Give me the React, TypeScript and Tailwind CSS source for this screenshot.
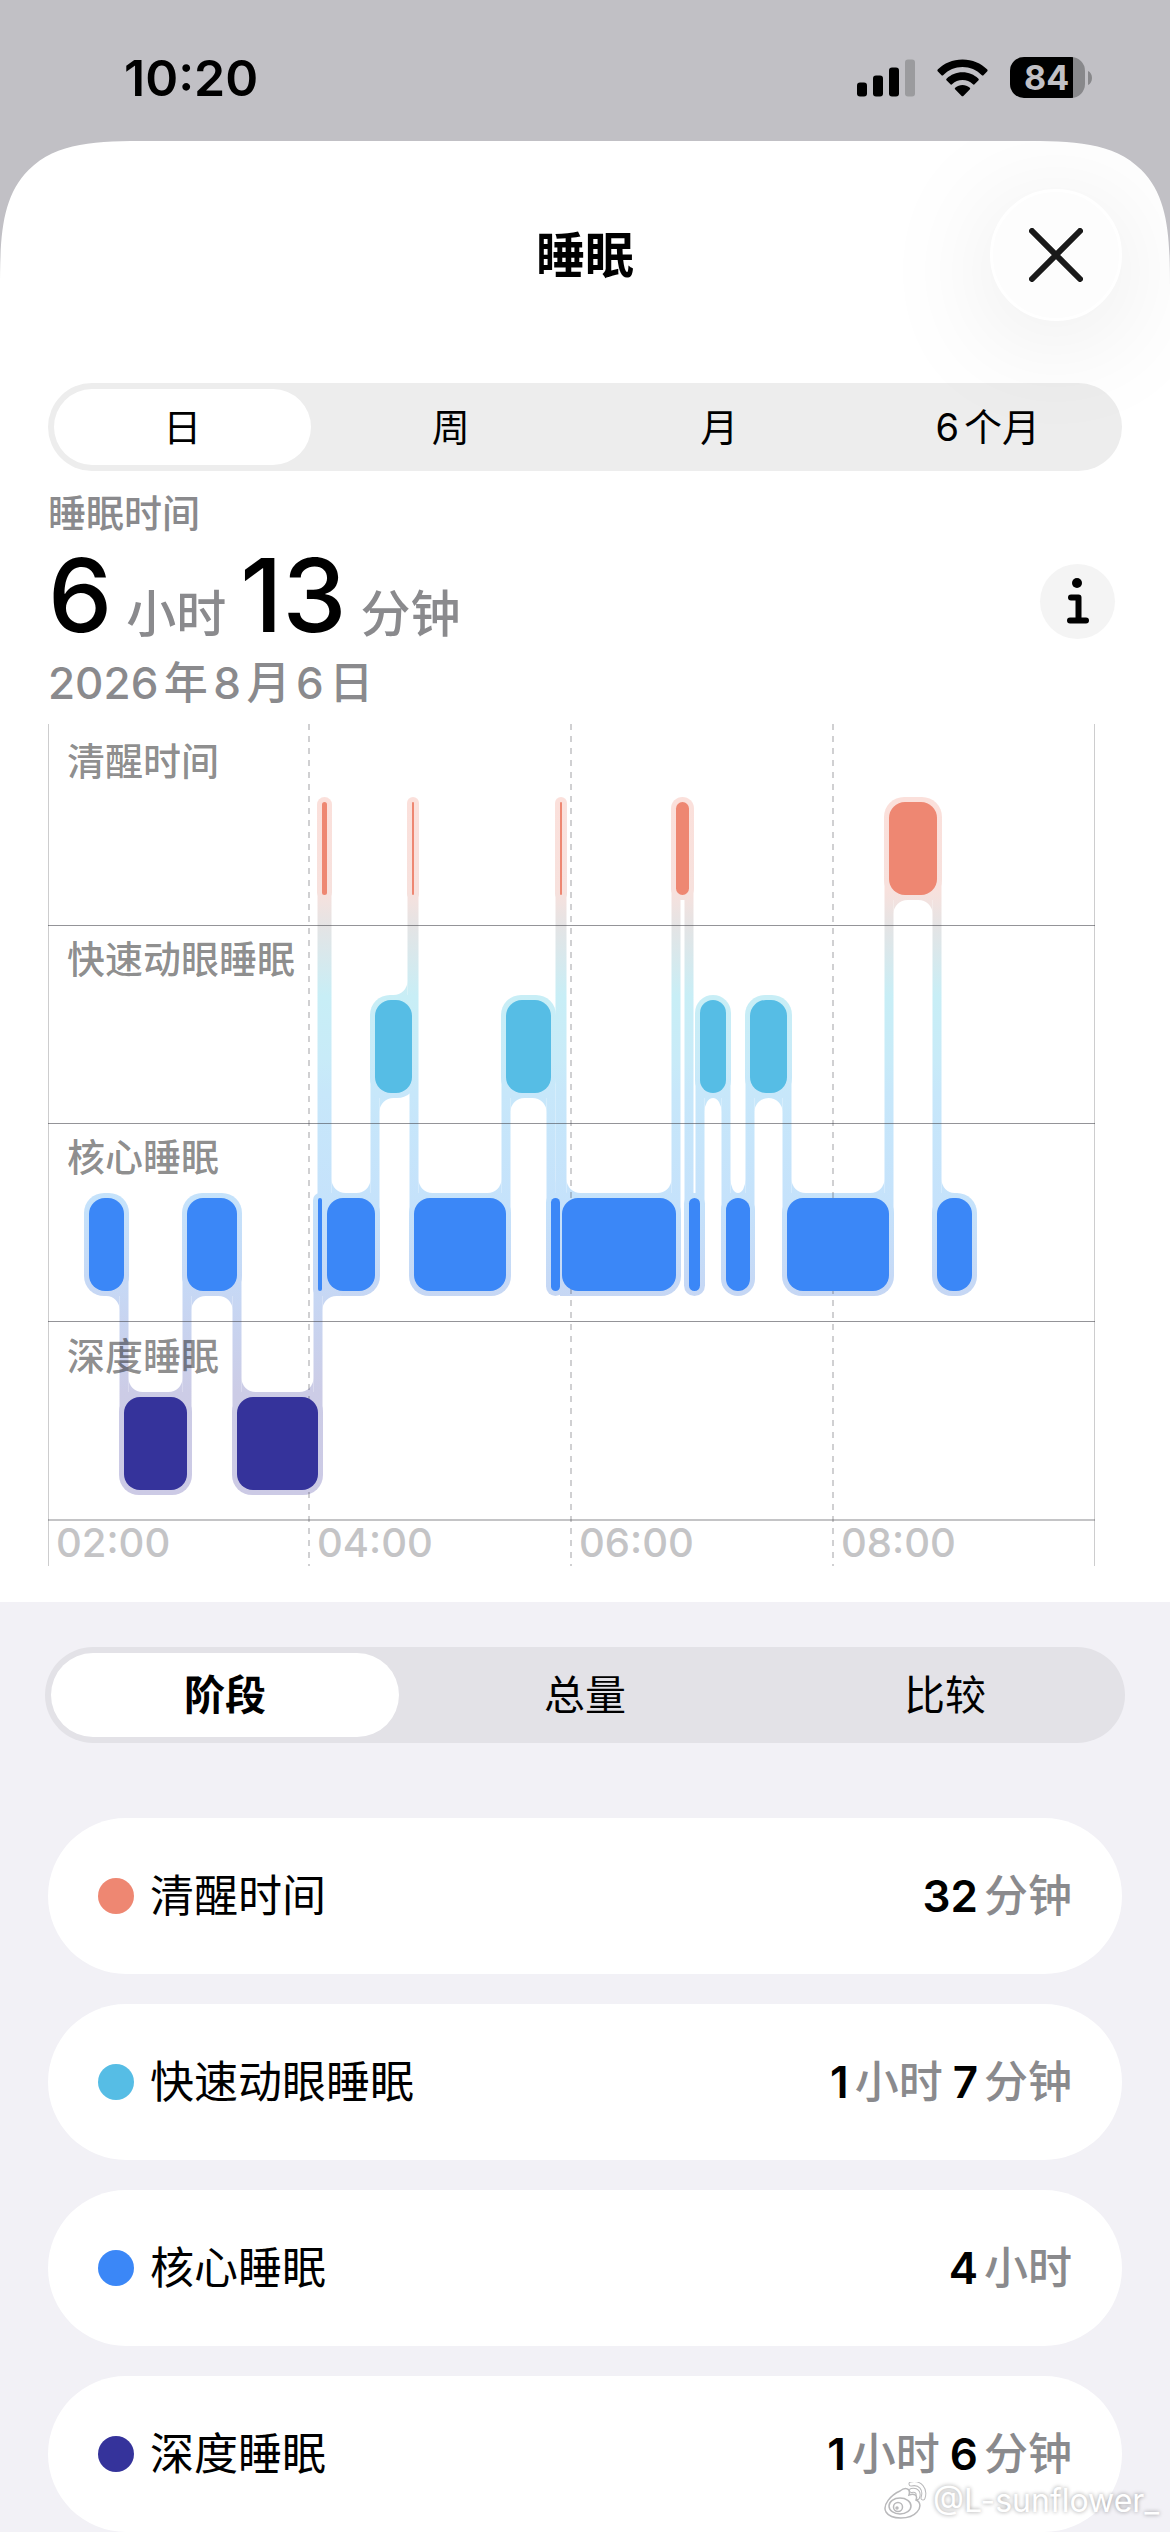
import { useState } from "react";

type Stage = "awake" | "rem" | "core" | "deep";

type Segment = { stage: Stage; start: number; end: number };

const stages: { id: Stage; name: string; color: string; dot: string; top: number }[] = [
  { id: "awake", name: "清醒时间", color: "#ee8772", dot: "bg-[#ee8772]", top: 78 },
  { id: "rem", name: "快速动眼睡眠", color: "#56bde5", dot: "bg-[#56bde5]", top: 276 },
  { id: "core", name: "核心睡眠", color: "#3b87f7", dot: "bg-[#3b87f7]", top: 474 },
  { id: "deep", name: "深度睡眠", color: "#35339b", dot: "bg-[#35339b]", top: 673 },
];

const totals: Record<Stage, { value: number; unit: string }[]> = {
  awake: [{ value: 32, unit: "分钟" }],
  rem: [
    { value: 1, unit: "小时" },
    { value: 7, unit: "分钟" },
  ],
  core: [{ value: 4, unit: "小时" }],
  deep: [
    { value: 1, unit: "小时" },
    { value: 6, unit: "分钟" },
  ],
};

// Chart units along the time axis, 131 per hour from 02:00
const segments: Segment[] = [
  { stage: "core", start: 41, end: 76 },
  { stage: "deep", start: 76, end: 139 },
  { stage: "core", start: 139, end: 189 },
  { stage: "deep", start: 189, end: 270 },
  { stage: "core", start: 270, end: 274 },
  { stage: "awake", start: 274, end: 279 },
  { stage: "core", start: 279, end: 327 },
  { stage: "rem", start: 327, end: 364 },
  { stage: "awake", start: 364, end: 366 },
  { stage: "core", start: 366, end: 458 },
  { stage: "rem", start: 458, end: 503 },
  { stage: "core", start: 503, end: 512 },
  { stage: "awake", start: 512, end: 514 },
  { stage: "core", start: 514, end: 628 },
  { stage: "awake", start: 628, end: 641 },
  { stage: "core", start: 641, end: 652 },
  { stage: "rem", start: 652, end: 678 },
  { stage: "core", start: 678, end: 702 },
  { stage: "rem", start: 702, end: 739 },
  { stage: "core", start: 739, end: 841 },
  { stage: "awake", start: 841, end: 889 },
  { stage: "core", start: 889, end: 924 },
];

const ticks = [
  { x: 0, label: "02:00" },
  { x: 261, label: "04:00" },
  { x: 523, label: "06:00" },
  { x: 785, label: "08:00" },
];

const BAR = 93;
const HALO = 5;
const LINK = 4.5;
const FILLET = 14;

const topOf = (stage: Stage) => stages.find((s) => s.id === stage)!.top;

// Blocks of one stage with only a blink between them count as one run
const bridges: { x: number; y: number }[] = [];
const runs = segments.reduce<Segment[]>((acc, seg) => {
  const last = acc.filter((r) => r.stage === seg.stage).pop();
  if (last && seg.start - last.end <= 5) {
    bridges.push({ x: last.end, y: topOf(seg.stage) - HALO });
    last.end = seg.end;
  } else {
    acc.push({ ...seg });
  }
  return acc;
}, []);

// Squares off the halo beside a link, then adds the concave corner outside it
function fillet(x: number, stage: Stage, dir: 1 | -1, edge: "top" | "bottom") {
  const run = runs.find((r) => r.stage === stage && x >= r.start && x <= r.end)!;
  const room = dir === 1 ? run.end - x : x - run.start;
  const out = edge === "top" ? -1 : 1;
  const cx = x + dir * LINK;
  const cy = edge === "top" ? topOf(stage) - HALO : topOf(stage) + BAR + HALO;
  const square = `M${x} ${cy}H${cx + dir * Math.min(16, room / 2)}V${cy - out * 20}H${x}Z`;
  const rx = Math.min(FILLET, (room - LINK * 2) / 2);
  if (rx < 3) return room > 5 ? square : "";
  const sweep = (dir === 1) === (edge === "top") ? 0 : 1;
  return `${square}M${cx} ${cy}V${cy + out * FILLET}A${rx} ${FILLET} 0 0 ${sweep} ${cx + dir * rx} ${cy}Z`;
}

const links = segments.slice(1).map((next, i) => {
  const prev = segments[i];
  const x = next.start;
  const down = topOf(next.stage) > topOf(prev.stage);
  const upper = down ? prev.stage : next.stage;
  const lower = down ? next.stage : prev.stage;
  return {
    x,
    y: topOf(upper) + BAR / 2,
    height: topOf(lower) - topOf(upper),
    corners: [fillet(x, upper, down ? -1 : 1, "bottom"), fillet(x, lower, down ? 1 : -1, "top")],
  };
});

function SleepChart() {
  return (
    <svg viewBox="0 0 1074 842" className="block w-full" role="img" aria-label="睡眠阶段图表">
      <defs>
        <linearGradient id="halo" gradientUnits="userSpaceOnUse" x1="0" y1="78" x2="0" y2="771">
          <stop offset="0" stopColor="#fbe0db" />
          <stop offset="0.13" stopColor="#f7e1dd" />
          <stop offset="0.18" stopColor="#e4e4e5" />
          <stop offset="0.28" stopColor="#c8eef6" />
          <stop offset="0.37" stopColor="#c8ebf8" />
          <stop offset="0.42" stopColor="#c7e7fa" />
          <stop offset="0.58" stopColor="#c5e2fb" />
          <stop offset="0.7" stopColor="#c6d8f5" />
          <stop offset="0.85" stopColor="#cccce6" />
          <stop offset="1" stopColor="#cccae5" />
        </linearGradient>
      </defs>

      <g fill="url(#halo)">
        {segments.map((s) => {
          const width = s.end - s.start + HALO * 2;
          return (
            <rect
              key={s.start}
              x={s.start - HALO}
              y={topOf(s.stage) - HALO}
              width={width}
              height={BAR + HALO * 2}
              rx={Math.min(20, width / 2)}
            />
          );
        })}
        {bridges.map((b) => (
          <rect key={b.x} x={b.x} y={b.y} width="18" height={BAR + HALO * 2} />
        ))}
        {links.map((l) => (
          <g key={l.x}>
            <rect x={l.x - LINK} y={l.y} width={LINK * 2} height={l.height} />
            {l.corners.map((d, i) => d && <path key={i} d={d} />)}
          </g>
        ))}
      </g>

      {/* Hour and stage lines */}
      <path d="M.5 0V842M1046.5 0V842" stroke="#3c3c43" strokeOpacity="0.26" />
      {ticks.slice(1).map((t) => (
        <path
          key={t.x}
          d={`M${t.x} 0V842`}
          stroke="#3c3c43"
          strokeOpacity="0.24"
          strokeWidth="2"
          strokeDasharray="6 6"
        />
      ))}
      <path d="M0 201.5H1047M0 399.5H1047M0 597.5H1047" stroke="#3c3c43" strokeOpacity="0.55" />
      <path d="M0 796H1047" stroke="#3c3c43" strokeOpacity="0.3" strokeWidth="2" />

      {segments.map((s) => (
        <rect
          key={s.start}
          x={s.start}
          y={topOf(s.stage)}
          width={s.end - s.start}
          height={BAR}
          rx={Math.min(16, (s.end - s.start) / 2)}
          fill={stages.find((st) => st.id === s.stage)!.color}
        />
      ))}

      <g fontSize="38" fontWeight="500" fill="#000" fillOpacity="0.46">
        {stages.map((s) => (
          <text key={s.id} x="19" y={s.top - 27}>
            {s.name}
          </text>
        ))}
      </g>
      <g fontSize="40" fontWeight="500" fill="#c4c4c6">
        {ticks.map((t) => (
          <text key={t.x} x={t.x + 8} y="833">
            {t.label}
          </text>
        ))}
      </g>
    </svg>
  );
}

function StatusBar() {
  return (
    <div className="flex h-[141px] items-center justify-between pl-[124px] pr-[78px] pt-[14px]">
      <span className="text-[50px] font-semibold leading-none">10:20</span>
      <div className="flex items-center">
        <svg width="58" height="38" viewBox="0 0 58 38" aria-hidden="true">
          <rect x="0" y="23.500" width="10" height="14" rx="3" />
          <rect x="16" y="16.500" width="10" height="21" rx="3" />
          <rect x="32" y="8.500" width="10" height="29" rx="3" />
          <rect x="48" y="0.500" width="10" height="37" rx="3" fill="#9b9b9e" />
        </svg>
        <svg className="ml-[22px]" width="51" height="38" viewBox="0 0 51 38" aria-hidden="true">
          <path d="M25.500 .5C35.500 .5 44 4.300 50 10.300c.8.800.8 1.500.1 2.200l-3.400 3.400c-.7.700-1.400.7-2.100 0C39.500 11 33 8 25.500 8S11.500 11 6.400 15.900c-.7.700-1.400.7-2.100 0L.9 12.500c-.7-.7-.7-1.400.1-2.200C7 4.300 15.500.5 25.500.5z" />
          <path d="M25.500 13.300c6.200 0 11.700 2.400 15.700 6.200.8.700.8 1.400.1 2.100l-3.500 3.500c-.7.700-1.300.7-2.100 0-2.700-2.500-6.200-4-10.200-4s-7.500 1.500-10.200 4c-.8.700-1.400.7-2.100 0l-3.500-3.500c-.7-.7-.7-1.400.1-2.100 4-3.800 9.500-6.200 15.700-6.200z" />
          <path d="M25.500 26c2.700 0 5.100.9 7 2.400.9.700.9 1.400.2 2.100l-6.100 6.200c-.8.800-1.400.8-2.200 0l-6.100-6.200c-.7-.7-.7-1.400.2-2.100 1.900-1.500 4.300-2.400 7-2.400z" />
        </svg>
        <div className="ml-[22px] flex h-[41px] w-[75px] items-center overflow-hidden rounded-[14px] bg-[linear-gradient(90deg,#000_84%,#88888b_84%)] pl-[14px] text-[34px] font-bold leading-none text-[#c1c0c5]">
          84
        </div>
        <svg className="ml-[3px]" width="4" height="14" viewBox="0 0 4 14" aria-hidden="true">
          <path d="M0 0c2.500 1 4 3.700 4 7s-1.500 6-4 7z" fill="#88888b" />
        </svg>
      </div>
    </div>
  );
}

function Watermark() {
  return (
    <div className="absolute bottom-[12px] right-[11px] flex items-center gap-[6px] text-[32px] leading-none text-white [text-shadow:0_0_4px_#00000066]">
      <svg width="44" height="38" viewBox="0 0 44 38" fill="none" stroke="#b9b9bb" strokeWidth="1.500" aria-hidden="true">
        <path d="M28 2c9-2 15 5 12 14M28.500 8.500c5-1 8 2 6 7" stroke="#b9b9bb" strokeWidth="5" strokeLinecap="round" />
        <path d="M28 2c9-2 15 5 12 14M28.500 8.500c5-1 8 2 6 7" stroke="#fff" strokeWidth="3" strokeLinecap="round" />
        <path d="M17 9c5-4 11-3 9 4 5-2 9 0 7 5 5 2 5 8 1 12-7 8-26 8-31 0C-1 23 8 13 17 9z" fill="#fff" />
        <ellipse cx="17" cy="24" rx="11" ry="8" />
        <circle cx="15" cy="25" r="4.500" />
        <circle cx="14" cy="26" r="1" />
      </svg>
      @L-sunflower_
    </div>
  );
}

const ranges = ["日", "周", "月", "6个月"];
const views = ["阶段", "总量", "比较"];

export default function App() {
  const [range, setRange] = useState("日");
  const [view, setView] = useState("阶段");

  return (
    <div className="relative min-h-screen bg-[#c1c0c5] font-['Inter','Noto_Sans_CJK_SC',sans-serif] text-black">
      <StatusBar />

      <main className="overflow-hidden rounded-t-[108px] bg-white [corner-shape:superellipse(1.7)] supports-[corner-shape:squircle]:rounded-t-[150px]">
        <header className="grid grid-cols-[132px_1fr_132px] items-center px-[48px] pb-[62px] pt-[48px]">
          <h1 className="col-start-2 text-center text-[49px] font-bold leading-none">睡眠</h1>
          <button
            aria-label="关闭"
            className="flex h-[132px] w-[132px] items-center justify-center rounded-full border-[3px] border-white bg-[#fdfdfd] shadow-[0_16px_120px_#0000001a]"
          >
            <svg width="54" height="54" viewBox="0 0 54 54" stroke="#1a1a1a" strokeWidth="6" strokeLinecap="round">
              <path d="M3 3l48 48M51 3L3 51" />
            </svg>
          </button>
        </header>

        <div className="mx-[48px] grid h-[88px] grid-cols-4 rounded-full bg-[#ededed]">
          {ranges.map((r) => (
            <button
              key={r}
              onClick={() => setRange(r)}
              className={`m-[6px] rounded-full text-[38px] leading-none [text-autospace:normal] ${
                r === range ? "bg-white" : ""
              }`}
            >
              {r}
            </button>
          ))}
        </div>

        {/* Summary */}
        <section className="flex items-center justify-between px-[48px] pt-[16px]">
          <div className="text-[#8a8a8d]">
            <p className="text-[38px] font-medium leading-[52px]">睡眠时间</p>
            <p className="flex items-baseline text-[50px] font-medium leading-none">
              <span className="text-[102px] leading-[112px] text-black">6</span>
              <span className="ml-[14px]">小时</span>
              <span className="ml-[14px] text-[102px] leading-[112px] text-black">13</span>
              <span className="ml-[14px]">分钟</span>
            </p>
            <p className="text-[44px] font-medium leading-[64px] [text-autospace:normal]">2026年8月6日</p>
          </div>
          <button
            aria-label="关于睡眠时间"
            className="mr-[7px] flex h-[75px] w-[75px] items-center justify-center rounded-full bg-[#f4f4f4]"
          >
            <svg width="22" height="46" viewBox="0 0 22 46" fill="none" stroke="#000" strokeWidth="6" strokeLinecap="round" strokeLinejoin="round">
              <circle cx="10" cy="5" r="5" fill="#000" stroke="none" />
              <path d="M4 19.500h7.500V42M3 42.500h16" />
            </svg>
          </button>
        </section>

        <div className="px-[48px] pb-[36px] pt-[9px]">
          <SleepChart />
        </div>

        <section className="bg-[#f2f1f6] pt-[45px]">
          <div className="mx-[45px] grid h-[96px] grid-cols-3 rounded-full bg-[#e3e2e7]">
            {views.map((v) => (
              <button
                key={v}
                onClick={() => setView(v)}
                className={`m-[6px] rounded-full text-[41px] leading-none ${
                  v === view ? "bg-white font-bold" : ""
                }`}
              >
                {v}
              </button>
            ))}
          </div>

          <ul className="mt-[75px] flex flex-col gap-[30px] px-[48px]">
            {stages.map((s) => (
              <li key={s.id} className="flex h-[156px] items-center rounded-full bg-white px-[50px] text-[44px]">
                <span className={`h-[36px] w-[36px] rounded-full ${s.dot}`} />
                <span className="ml-[16px]">{s.name}</span>
                <span className="ml-auto flex items-baseline gap-[10px]">
                  {totals[s.id].map((t) => (
                    <span key={t.unit} className="flex items-baseline gap-[6px]">
                      <span className="font-semibold">{t.value}</span>
                      <span className="font-medium text-[#8a8a8d]">{t.unit}</span>
                    </span>
                  ))}
                </span>
              </li>
            ))}
          </ul>
        </section>
      </main>

      <Watermark />
    </div>
  );
}
